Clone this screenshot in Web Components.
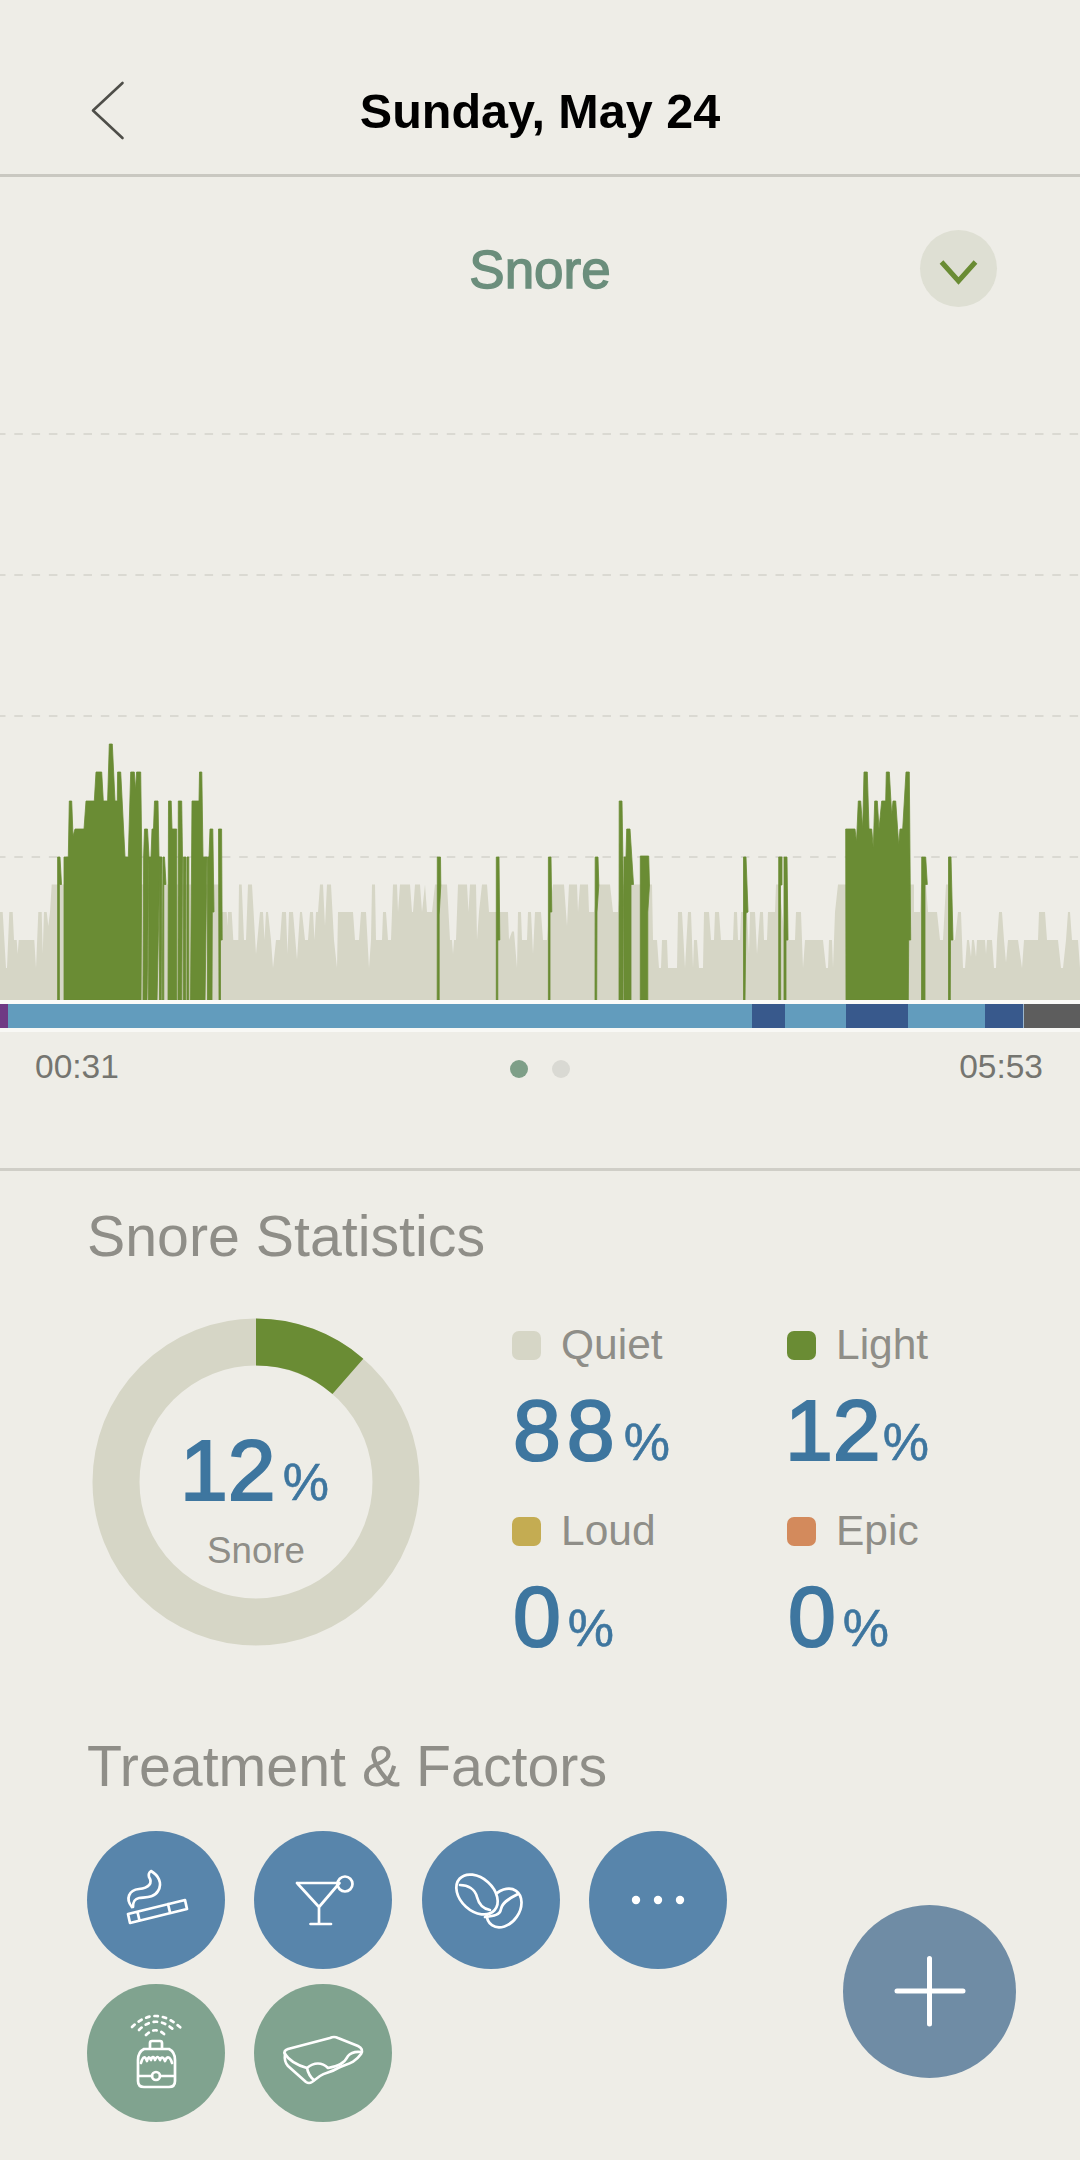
<!DOCTYPE html>
<html><head><meta charset="utf-8">
<style>
html,body{margin:0;padding:0;background:#EEEDE7}
body{width:1080px;height:2160px;overflow:hidden;position:relative;font-family:"Liberation Sans",Arial,sans-serif}
</style></head>
<body>
<snore-app></snore-app>
<script>
const tpl=(h)=>{const t=document.createElement('template');t.innerHTML=h;return t};
class Base extends HTMLElement{
  connectedCallback(){ if(!this.shadowRoot){this.attachShadow({mode:'open'});this.shadowRoot.appendChild(this.constructor.t.content.cloneNode(true));this.init&&this.init();}}
}
class AppHeader extends Base{static t=tpl(`<style>
:host{display:flex;position:relative;align-items:center;justify-content:center;height:174px;border-bottom:3px solid #C9C8C1;box-sizing:content-box}
.b{position:absolute;left:0;top:0;width:140px;height:174px}
span{font-weight:700;font-size:48.5px;color:#000;line-height:54px;margin-top:48px}
</style><svg class="b" viewBox="0 0 140 174"><path d="M122.5 83 L93 110.5 L122.5 138" fill="none" stroke="#4E4E49" stroke-width="2.6" stroke-linecap="round" stroke-linejoin="round"/></svg><span><slot></slot></span>`)}
class ChartHead extends Base{static t=tpl(`<style>
:host{display:flex;position:relative;justify-content:center;height:243px;box-sizing:border-box;padding-top:63px}
span{font-size:53px;line-height:60px;color:#6B8E7C;-webkit-text-stroke:1.4px #6B8E7C}
.btn{position:absolute;left:920px;top:53px;width:77px;height:77px;border-radius:50%;background:#DEDFD3}
svg{display:block}
</style><span><slot></slot></span><div class="btn"><svg viewBox="0 0 77 77" width="77" height="77"><path d="M21.5 32 L38.5 51 L55.5 32" fill="none" stroke="#6A8C34" stroke-width="5"/></svg></div>`)}
const Y=[1000,968,940,912,884.5,857,829,801,772,744];
const lv=n=>{const f=Math.floor(n),r=n-f;return f>=9?Y[9]:Y[f]+(Y[f+1]-Y[f])*r};
const QUIET=[0,3,2.7,3,6,1,7,1,9.3,3,12.7,3,14,2,16.7,2,17.7,1.5,18.7,2,34.3,2,36,1,38.3,3,41.7,3,42.7,1.5,44,3,46.7,3,48.3,2.5,50,3,51.7,4,58,4,220,4,221,3,226.7,3,227.5,2.5,228,3,231.7,3,233.3,2,238.3,2,239,4,241.7,4,244,2,246,2,248,4,252,4,256,1.5,260,3,263,3,264.5,2,266,3,268,3,271,2,273,1,276,2,280,2,282,3,286,3,287.5,1.5,289,3,293,3,297,1.3,300,3,302,3,305,2,308,2,310,3,313,3,314.5,2,316,3,318,3,320,4,323,4,325,2.5,327,4,331,4,334,2,337,1,338,3,353,3,355,2,359,2,361,3,366,3,369,1,371,2,372,4,375,4,376,2,382,2,383,3,386,3,388,2,391,2,392,3,393,4,397,4,398,3,400,4,410,4,412,3,413,3,415,4,420,4,422,3,425,4,427,3,432,3,435,4,447,4,450,2,452,2,453,1.5,454,2,456,2,458,4,467,4,468.5,3,470,4,476,4,477,2,479,3,482,4,487,4,489,3,497,3,502,3,508,3,509,2,512,2.3,514,2.3,517,1,518,3,521,3,522,2,527,2,528,3,531,3,533,1.5,535,3,541,3,543,2,547,2,549,3,553,4,564,4,567,2.5,569,4,577,4,578,3,580,4,588,4,589,3,594,3,598,4,610,4,613,3,618,3,620,4,652,4,653,2,657,2,659,1,661,1,662,2,667,2,668,1,677,1,678,3,682,3,685,1,688,3,691,3,693,1,694,2,697,2,699,1,703,1,704,3,709,3,711,2,714,2,715,3,719,3,721,2,733,2,734,3,737,3,738,2,740,2,741,3,747,3,749,1.5,750,3,755,3,757,1.5,758,2,760,3,763,3,764,2,767,2,768,3,775,3,776,4,779,4,785,2,795,2,796,3,801,3,803,1,805,2,823,2,826,1,828,1,829,2,832,2,833,1,835,3,838,4,914,4,914,3,920,3,921,4,926,4,928,3,937,3,940,2,943,2,946,4,948,4,952,2,955,2,958,3,961,3,963,1,965,1,967,2,969,2,971,1.4,972,2,974,2,976,1.4,977,2,985,2,986,1.5,987,2,992,2,994,1,996,1,997,2,999,3,1002,3,1004,2,1006,1.2,1008,2,1018,2,1022,1,1024,2,1038,2,1039,3,1045,3,1047,2,1058,2,1061,1,1063,1,1066,2,1068,3,1070,3,1072,2,1078,2,1080,1];
const GREEN=[
 [57.6,1000,57.6,857,60,857,61.5,884.5,59.4,884.5,59.4,1000],
 [64,1000,64,857,68.3,857,69.3,801,71.7,801,73,836,75,829,84,829,86,801,94.3,801,96,772,101.7,772,103.3,801,107.6,801,109.3,744,112.3,744,115,801,117.3,801,117.6,772,120.7,772,125,857,128.3,857,130.7,772,134.3,772,135.5,790,136.6,772,140.7,772,141.8,857,141,1000],
 [143,1000,143.6,857,144.5,829,147.5,829,149,857,147,1000],
 [148.5,1000,149,857,151,857,152,829,153.5,829,154.5,801,158,801,159,857,160,857,157,1000],
 [159.5,1000,159.6,857,162,857,161.2,1000],
 [162.3,1000,163,857,164.5,857,166,884.5,163.8,884.5,163.8,1000],
 [168,1000,168.5,801,171.2,801,172,829,176.7,829,176.7,1000],
 [178,1000,178.3,801,181.7,801,182.5,857,181.7,1000],
 [183.3,1000,183.3,857,186,857,185.7,1000],
 [187,1000,187,857,188.8,857,188.8,1000],
 [190.5,1000,192,801,199,801,199.5,772,201.8,772,203,857,207,857,205,1000],
 [207.5,1000,207.5,857,209,857,210,829,212.8,829,214,912,212.3,912,212,1000],
 [219,1000,218.5,829,221.6,829,222.2,940,220.5,940,220.5,1000],
 [437.2,1000,437.3,857,440.5,857,440.8,885,439.2,915,439.2,1000],
 [496.3,1000,496.3,857,499,857,499.8,940,497.8,940,497.8,1000],
 [548.4,1000,548.4,857,551,857,551.8,912,550,912,550,1000],
 [595,1000,595.2,857,598,857,598.8,885,597,912,596.7,1000],
 [619,1000,619.2,801,622,801,623.5,900,623,1000],
 [624,1000,624,857,626,857,626.7,829,630,829,633.5,884.5,631,884.5,631,1000],
 [640.3,1000,640.3,856,648.7,856,649.5,885,647.8,912,647.8,1000],
 [743.5,1000,743.5,857,746,857,748,912,746,913,745,1000],
 [778.7,1000,778.7,857,782,857,782,885,780.5,885,780.7,1000],
 [784,1000,784,857,787,857,788,940,786,940,786,1000],
 [846,1000,845.7,829,855,829,856.5,842,858.3,801,860.7,801,862.7,829,864,772,867.3,772,869,829,871.7,829,873.3,848,874.7,801,877.3,801,879,829,881.7,801,885.7,801,886.3,772,889.3,772,891.7,815,893,801,895.7,801,898.7,845,900,829,902.7,829,906,772,909.3,772,910.7,940,908.7,940,908.3,1000],
 [921.5,1000,921.7,857,925.7,857,927.3,884.5,925,884.5,925,1000],
 [948.5,1000,948.5,857,951,857,953,940,950.5,940,950.3,1000]
];
class SnoreGraph extends Base{static t=tpl(`<style>
:host{display:block;height:580px}
svg{display:block}
</style><svg width="1080" height="580" viewBox="0 420 1080 580"></svg>`);
 init(){const s=this.shadowRoot.querySelector('svg');let h='';
  for(const y of [434,575,716,857])h+=`<line x1="-3" x2="1080" y1="${y}" y2="${y}" stroke="#DAD9D2" stroke-width="2" stroke-dasharray="8.5 8.8"/>`;
  let q='0,1000 ';for(let i=0;i<QUIET.length;i+=2)q+=QUIET[i]+','+lv(QUIET[i+1]).toFixed(1)+' ';q+='1080,1000';
  h+=`<polygon points="${q}" fill="#D6D6C6"/>`;
  for(const g of GREEN){let o='';for(let i=0;i<g.length;i+=2)o+=g[i]+','+g[i+1]+' ';h+=`<polygon points="${o}" fill="#6A8C34" stroke="#6A8C34" stroke-width=".8"/>`}
  s.innerHTML=h;}}
class StageBar extends Base{static t=tpl(`<style>
:host{display:flex;height:24px;border-top:4px solid #FBFBF8;border-bottom:4px solid #F8F8F5;box-sizing:content-box}
i{display:block;height:100%}
</style><i style="width:8px;background:#6F3A84"></i><i style="width:744px;background:#629CBD"></i><i style="width:33px;background:#38598C"></i><i style="width:61px;background:#629CBD"></i><i style="width:62px;background:#38598C"></i><i style="width:77px;background:#629CBD"></i><i style="width:38px;background:#38598C;border-right:1px solid #9DB7CC;box-sizing:content-box"></i><i style="flex:1;background:#5D5D5D"></i>`)}
class TimeRow extends Base{static t=tpl(`<style>
:host{display:flex;justify-content:space-between;align-items:center;box-sizing:border-box;padding:0 37px 66px 35px;border-bottom:3px solid #CFCEC7;height:139px;position:relative;font-size:33.5px;color:#757570}
.d{position:absolute;left:510px;top:28px;display:flex;gap:24px}
.d i{display:block;width:18px;height:18px;border-radius:50%;background:#D9D9D3}
.d i:first-child{background:#7E9F88}
</style><span>00:31</span><div class="d"><i></i><i></i></div><span>05:53</span>`)}
class SectionTitle extends Base{static t=tpl(`<style>
:host{display:block;font-size:57.3px;line-height:66px;color:#8F8E88;padding-left:87px}
</style><slot></slot>`)}
class DonutRing extends Base{static t=tpl(`<style>
:host{display:grid;width:328px;height:328px;place-items:center;flex:none}
svg,.c{grid-area:1/1}
.c{text-align:center;color:#3E769F;margin-top:32px}
.n{font-size:86px;line-height:90px;-webkit-text-stroke:2.2px #3E769F;padding-right:3px}
.p{font-size:52px;-webkit-text-stroke:.6px #3E769F;margin-left:7px}
.l{font-size:36.7px;line-height:40px;color:#8F8E88;margin-top:4px}
.t{white-space:nowrap}
</style><svg width="328" height="328" viewBox="0 0 328 328"><circle cx="164" cy="164" r="140" fill="none" stroke="#D6D6C6" stroke-width="47"/><circle cx="164" cy="164" r="140" fill="none" stroke="#6A8C34" stroke-width="47" stroke-dasharray="100.2 800" transform="rotate(-90 164 164)"/></svg><div class="c"><div class="t n">12<span class="p">%</span></div><div class="l">Snore</div></div>`)}
class StatCell extends Base{static t=tpl(`<style>
:host{display:block;height:186px}
.h{display:flex;align-items:center;gap:20px;font-size:42.5px;line-height:48px;color:#8F8E88}
.h i{display:block;width:29px;height:29px;border-radius:7px;background:var(--c)}
.v{font-size:86px;line-height:90px;color:#3E769F;-webkit-text-stroke:2.2px #3E769F;margin-top:16px;margin-left:var(--ml,1px);white-space:nowrap}
.num{letter-spacing:var(--ls,6px)}
.pc{font-size:52px;-webkit-text-stroke:.6px #3E769F;margin-left:var(--pm,3px)}
</style><div class="h"><i></i><span id="a"></span></div><div class="v"><span class="num" id="n"></span><span class="pc">%</span></div>`);
 init(){const r=this.shadowRoot,v=this.getAttribute('value');r.getElementById('a').textContent=this.getAttribute('label');r.getElementById('n').textContent=v;this.style.setProperty('--c',this.getAttribute('color'));
  if(v==='12'){this.style.setProperty('--ml','-2px');this.style.setProperty('--ls','0px');this.style.setProperty('--pm','2px')}
  if(v==='0'){this.style.setProperty('--ls','3px');this.style.setProperty('--pm','4px')}}}
class StatsBlock extends Base{static t=tpl(`<style>
:host{display:flex;padding-left:92px;margin-top:49px;height:372px;box-sizing:border-box}
.g{display:grid;grid-template-columns:275px 200px;margin-left:92px;margin-top:3px}
</style><slot name="d"></slot><div class="g"><slot></slot></div>`)}
const ICONS={
 smoke:`<path d="M41 83 L98 69 L100 78 L43 92 Z M50.5 81 L52.5 89.500 M81 73 L83 81.500"/><path d="M45 76 C38 68 42 59 52 58 C62 57 66 52 62 46 Q61 42 64 40 C71 44 76 52 71 60 C67 67 58 66 52 67 C47 68 46 71 46 76"/>`,
 drink:`<path d="M43 52 H84 M43 52 L65 76 L85.500 52 M65 76 V93 M56.500 93 H77"/><circle cx="91" cy="53" r="7.500"/>`,
 coffee:`<ellipse cx="82" cy="77" rx="21" ry="15.500" transform="rotate(-55 82 77)"/><path d="M96 63 C86 68 80 72 79 78 C78 84 72 85 63 86"/><ellipse cx="55" cy="63.500" rx="23.500" ry="16.500" transform="rotate(42 55 63.500)" fill="#5885AB"/><path d="M38 54 C46 54 53 58 55 66 C57 74 62 78 68 79"/>`,
 more:`<g fill="#fff" stroke="none"><circle cx="47" cy="69" r="4.200"/><circle cx="69" cy="69" r="4.200"/><circle cx="91" cy="69" r="4.200"/></g>`,
 humid:`<path d="M63 65 V59 Q63 57 65 57 H73 Q75 57 75 59 V65 M57 65 H82 Q88 68 88 76 V97 Q88 103 82 103 H57 Q51 103 51 97 V76 Q51 68 57 65 Z M51 92 H65 M73 92 H88"/><circle cx="69" cy="92" r="4"/><path d="M54 79 C56 72 58 72 60 77 C61 73 62 72 64 76 C65 72 67 72 68 76 C70 72 71 72 73 76 C74 73 76 72 78 77 C80 72 83 72 85 79"/><g stroke-dasharray="3.500 5"><path d="M45 43 Q69 20 95 45"/><path d="M52 46 Q69 29 88 47"/><path d="M59 51 Q69 41 79 52"/></g>`,
 pillow:`<path d="M31 70 Q29 67 34 65 L76 54 Q80 52 84 54 L104 62 Q110 65 107 70 C100 80 92 80 84 84 C76 89 72 88 66 92 L58 98 Q55 100 52 98 L34 82 Q30 78 31 70 Z"/><path d="M31 70 C36 78 46 82 53 84 C60 78 68 78 74 84 C84 82 90 80 94 72 Q98 67 107 68 M53 84 C54 89 56 93 60 96"/>`
};
class FactorButton extends Base{static t=tpl(`<style>
:host{display:block;width:138px;height:138px;border-radius:50%;background:var(--bg,#5885AB)}
svg{display:block}
</style><svg width="138" height="138" viewBox="0 0 138 138" fill="none" stroke="#fff" stroke-width="2.700" stroke-linecap="round" stroke-linejoin="round"></svg>`);
 init(){this.shadowRoot.querySelector('svg').innerHTML=ICONS[this.getAttribute('icon')];if(this.getAttribute('tone')==='green')this.style.setProperty('--bg','#80A38F')}}
class FactorGrid extends Base{static t=tpl(`<style>
:host{display:flex;flex-wrap:wrap;gap:15px 29.300px;width:640px;padding-left:87px;margin-top:32px}
</style><slot></slot>`)}
class AddFab extends Base{static t=tpl(`<style>
:host{display:block;position:absolute;left:843px;top:1905px;width:173px;height:173px;border-radius:50%;background:#6F8CA5}
svg{display:block}
</style><svg width="173" height="173" viewBox="0 0 173 173"><path d="M54 86 H120 M86.500 53.500 V119" stroke="#fff" stroke-width="5" stroke-linecap="round"/></svg>`)}
class SnoreApp extends Base{static t=tpl(`<style>
:host{display:block;width:1080px;height:2160px;position:relative;color:#8F8E88}
</style>
<app-header>Sunday, May 24</app-header>
<chart-head>Snore</chart-head>
<snore-graph></snore-graph>
<stage-bar></stage-bar>
<time-row></time-row>
<section-title style="margin-top:32px">Snore Statistics</section-title>
<stats-block>
 <donut-ring slot="d"></donut-ring>
 <stat-cell label="Quiet" value="88" color="#D6D6C6"></stat-cell>
 <stat-cell label="Light" value="12" color="#6A8C34"></stat-cell>
 <stat-cell label="Loud" value="0" color="#C4AC52"></stat-cell>
 <stat-cell label="Epic" value="0" color="#D38A5C"></stat-cell>
</stats-block>
<section-title style="margin-top:43px">Treatment &amp; Factors</section-title>
<factor-grid>
 <factor-button icon="smoke"></factor-button>
 <factor-button icon="drink"></factor-button>
 <factor-button icon="coffee"></factor-button>
 <factor-button icon="more"></factor-button>
 <factor-button icon="humid" tone="green"></factor-button>
 <factor-button icon="pillow" tone="green"></factor-button>
</factor-grid>
<add-fab></add-fab>`)}
customElements.define('app-header',AppHeader);
customElements.define('chart-head',ChartHead);
customElements.define('snore-graph',SnoreGraph);
customElements.define('stage-bar',StageBar);
customElements.define('time-row',TimeRow);
customElements.define('section-title',SectionTitle);
customElements.define('donut-ring',DonutRing);
customElements.define('stat-cell',StatCell);
customElements.define('stats-block',StatsBlock);
customElements.define('factor-button',FactorButton);
customElements.define('factor-grid',FactorGrid);
customElements.define('add-fab',AddFab);
customElements.define('snore-app',SnoreApp);
</script>
</body></html>
